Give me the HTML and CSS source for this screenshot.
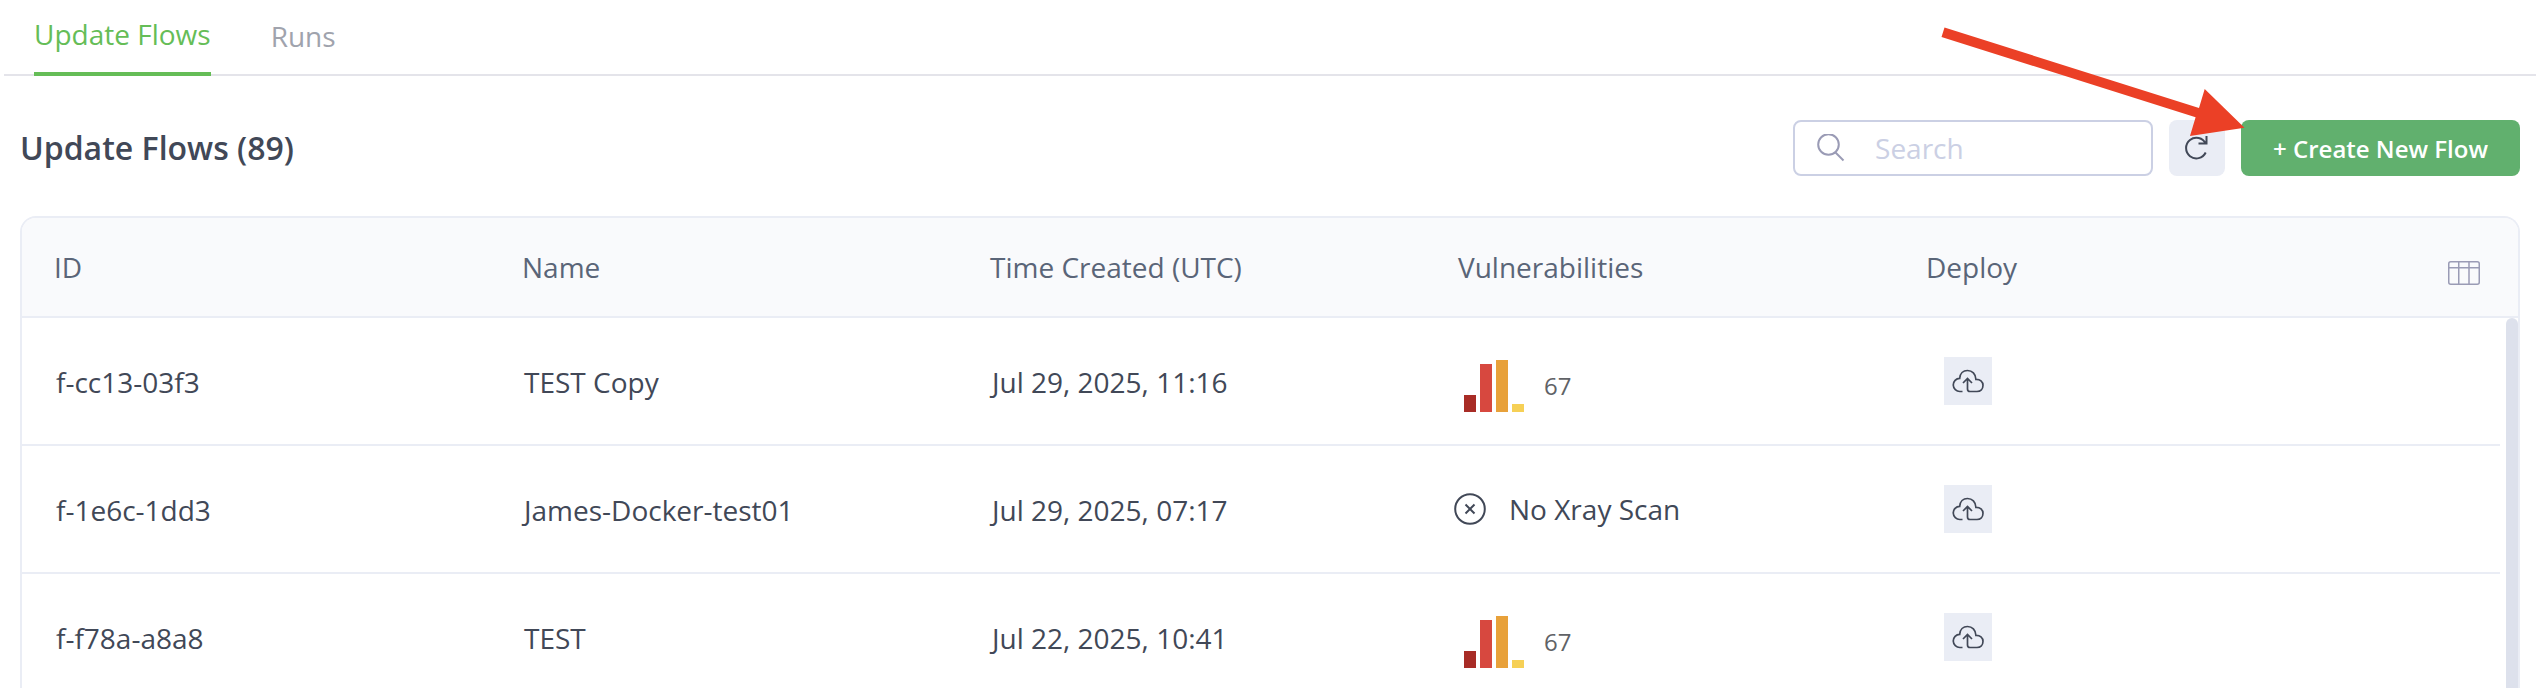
FILE: index.html
```html
<!DOCTYPE html>
<html lang="en">
<head>
<meta charset="utf-8">
<meta name="viewport" content="width=device-width, initial-scale=1">
<title>Update Flows</title>
<link rel="stylesheet" href="styles.css">
</head>
<body>
<svg class="sprite" aria-hidden="true">
  <symbol id="cloud-upload" viewBox="0 0 32 24">
    <path d="M10.500 22.500H8A6.600 6.600 0 0 1 7.700 9.300C8 4.500 11.200 1.500 15.500 1.500C20.200 1.500 23.700 5 23.900 10.300C28 10.100 31 12.500 31 16.300C31 20 28.500 22.500 25 22.500H18Q15.500 22.500 15.500 20V10.500M11 14L15.500 9.500L20 14" fill="none" stroke="currentColor" stroke-width="1.700"/>
  </symbol>
  <symbol id="severity-bars" viewBox="0 0 60 52">
    <path d="M0 35h12v17H0z" fill="#a82c26"/>
    <path d="M16 4h12v48H16z" fill="#d7483f"/>
    <path d="M32 0h12v52H32z" fill="#e8a13a"/>
    <path d="M48 44h12v8H48z" fill="#f6d056"/>
  </symbol>
</svg>

<nav class="tabs">
  <a class="tab tab-active" href="#flows" aria-current="page">Update Flows</a>
  <a class="tab" href="#runs">Runs</a>
</nav>

<main class="content">
  <header class="toolbar">
    <h1 class="title">Update Flows (89)</h1>
    <div class="actions">
      <label class="search">
        <svg class="search-icon" viewBox="0 0 28 28" aria-hidden="true"><circle cx="11.500" cy="10.500" r="10.300"/><path d="M18.500 18.500L26.500 26.500"/></svg>
        <input class="search-input" type="text" placeholder="Search" aria-label="Search">
      </label>
      <button class="refresh" type="button" aria-label="Refresh">
        <svg class="refresh-icon" viewBox="0 0 28 28" aria-hidden="true"><path d="M22.700 18.500A10.300 10.300 0 1 1 22.700 9.700M23.500 2V9.500H15.500"/></svg>
      </button>
      <button class="create" type="button">+ Create New Flow</button>
      <svg class="pointer" viewBox="0 0 306 112" aria-hidden="true"><path d="M4.500 1.500L259 82L264.700 63L304.500 101.700L250 110L255.600 91.300L1.500 11z"/></svg>
    </div>
  </header>

  <section class="card">
    <table class="flows">
      <colgroup>
        <col class="col-data"><col class="col-data"><col class="col-data"><col class="col-data"><col class="col-data"><col><col class="col-gutter">
      </colgroup>
      <thead>
        <tr>
          <th scope="col">ID</th>
          <th scope="col">Name</th>
          <th scope="col">Time Created (UTC)</th>
          <th scope="col">Vulnerabilities</th>
          <th scope="col">Deploy</th>
          <td class="picker" colspan="2">
            <button class="columns" type="button" aria-label="Choose columns">
              <svg class="columns-icon" viewBox="0 0 32 24" aria-hidden="true"><rect x="0.750" y="0.750" width="30.500" height="22.500" rx="2"/><path d="M1 6.750H31M10.750 1V23M21 1V23"/></svg>
            </button>
          </td>
        </tr>
      </thead>
      <tbody>
        <tr>
          <td>f-cc13-03f3</td>
          <td>TEST Copy</td>
          <td>Jul 29, 2025, 11:16</td>
          <td class="cell-widget"><div class="severity"><svg class="bars" aria-hidden="true"><use href="#severity-bars"/></svg><span class="count">67</span></div></td>
          <td class="cell-widget"><button class="deploy" type="button" aria-label="Deploy f-cc13-03f3"><svg class="cloud"><use href="#cloud-upload"/></svg></button></td>
          <td></td>
          <td class="gutter"></td>
        </tr>
        <tr>
          <td>f-1e6c-1dd3</td>
          <td>James-Docker-test01</td>
          <td>Jul 29, 2025, 07:17</td>
          <td class="cell-widget"><div class="unscanned"><svg class="no-scan" viewBox="0 0 32 32" aria-hidden="true"><circle cx="16" cy="16" r="14.800"/><path d="M11.500 11.500L20.500 20.500M20.500 11.500L11.500 20.500"/></svg><span>No Xray Scan</span></div></td>
          <td class="cell-widget"><button class="deploy" type="button" aria-label="Deploy f-1e6c-1dd3"><svg class="cloud"><use href="#cloud-upload"/></svg></button></td>
          <td></td>
          <td class="gutter"></td>
        </tr>
        <tr>
          <td>f-f78a-a8a8</td>
          <td>TEST</td>
          <td>Jul 22, 2025, 10:41</td>
          <td class="cell-widget"><div class="severity"><svg class="bars" aria-hidden="true"><use href="#severity-bars"/></svg><span class="count">67</span></div></td>
          <td class="cell-widget"><button class="deploy" type="button" aria-label="Deploy f-f78a-a8a8"><svg class="cloud"><use href="#cloud-upload"/></svg></button></td>
          <td></td>
          <td class="gutter"></td>
        </tr>
      </tbody>
    </table>
    <div class="scroll-thumb"></div>
  </section>
</main>
</body>
</html>
```
FILE: styles.css
```css
* { box-sizing: border-box; }

body {
  margin: 0;
  height: 100vh;
  display: flex;
  flex-direction: column;
  overflow: hidden;
  background: #fff;
  color: #414857;
  font-family: "Open Sans", "Noto Sans", sans-serif;
  font-size: 28px;
  line-height: 40px;
}

button { border: 0; padding: 0; font: inherit; cursor: pointer; }
svg { display: block; }
.sprite { position: absolute; width: 0; height: 0; }

.tabs {
  flex: none;
  display: flex;
  gap: 60px;
  height: 76px;
  margin: 0 6px 0 4px;
  padding-left: 30px;
  box-shadow: inset 0 -2px #e4e4ea;
}
.tab {
  padding-top: 16px;
  color: #a0a3ad;
  text-decoration: none;
}
.tab-active {
  padding-top: 14px;
  color: #65bd57;
  border-bottom: 4px solid #65bd57;
}

.content {
  flex: 1;
  min-height: 0;
  display: flex;
  flex-direction: column;
  padding: 44px 22px 0 20px;
}
.toolbar {
  flex: none;
  display: flex;
  justify-content: space-between;
  align-items: center;
  margin-bottom: 40px;
}
.title { margin: 0; font-size: 32px; font-weight: 600; }

.actions { position: relative; display: flex; gap: 16px; }
.search {
  display: flex;
  align-items: center;
  gap: 30px;
  width: 360px;
  height: 56px;
  padding: 0 20px 0 22px;
  border: 2px solid #cbd0e4;
  border-radius: 8px;
}
.search-icon { flex: none; width: 28px; height: 28px; fill: none; stroke: #9a9bb5; stroke-width: 2; }
.search-input {
  flex: 1;
  min-width: 0;
  padding: 0;
  border: 0;
  outline: 0;
  background: none;
  color: #414857;
  font: inherit;
}
.search-input::placeholder { color: #cbd0e4; opacity: 1; }
.refresh {
  display: grid;
  place-items: center;
  width: 56px;
  height: 56px;
  border-radius: 8px;
  background: #eaedf5;
}
.refresh-icon { width: 28px; height: 28px; fill: none; stroke: #414857; stroke-width: 2; }
.create {
  height: 56px;
  padding: 2px 32px 0;
  border-radius: 8px;
  background: #61b06e;
  color: #fff;
  font-size: 24px;
  font-weight: 600;
  white-space: nowrap;
}
.pointer {
  position: absolute;
  top: -94px;
  right: 274px;
  width: 306px;
  height: 112px;
  fill: #eb4026;
  pointer-events: none;
}

.card {
  position: relative;
  flex: 1;
  min-height: 0;
  overflow: hidden;
  border: 2px solid #eaedf5;
  border-bottom: 0;
  border-radius: 16px 16px 0 0;
}
.flows {
  width: 100%;
  table-layout: fixed;
  border-collapse: separate;
  border-spacing: 0;
}
.col-data { width: 18.75%; }
.col-gutter { width: 18px; }
.flows th, .flows td { padding: 0; border-bottom: 2px solid #eaedf5; text-align: left; }
.flows thead tr { height: 100px; background: #f9fafc; }
.flows th { padding-left: 32px; color: #5a6578; font-weight: 400; }
.flows tbody tr { height: 128px; }
.flows tbody td { padding: 2px 0 0 34px; white-space: nowrap; }
.flows tbody .cell-widget { padding-top: 0; }
.flows tbody .gutter { padding: 0; border: 0; }
.flows .picker { padding: 12px 38px 0 0; }

.columns { display: block; margin-left: auto; background: none; }
.columns-icon { width: 32px; height: 24px; fill: none; stroke: #9a9bb5; stroke-width: 1.5; }

.severity { display: flex; align-items: center; gap: 20px; padding: 10px 0 0 4px; }
.bars { width: 60px; height: 52px; }
.count { color: #606266; font-size: 24px; }
.unscanned { display: flex; align-items: center; gap: 23px; margin-left: -6px; }
.no-scan { width: 32px; height: 32px; fill: none; stroke: #414857; stroke-width: 2; }
.deploy {
  display: grid;
  place-items: center;
  width: 48px;
  height: 48px;
  margin-left: 16px;
  background: #eaedf5;
  color: #414857;
}
.cloud { width: 32px; height: 24px; }

.scroll-thumb {
  position: absolute;
  top: 100px;
  right: 0;
  bottom: 0;
  width: 12px;
  border-radius: 6px 6px 0 0;
  background: #dde1ec;
}
```
